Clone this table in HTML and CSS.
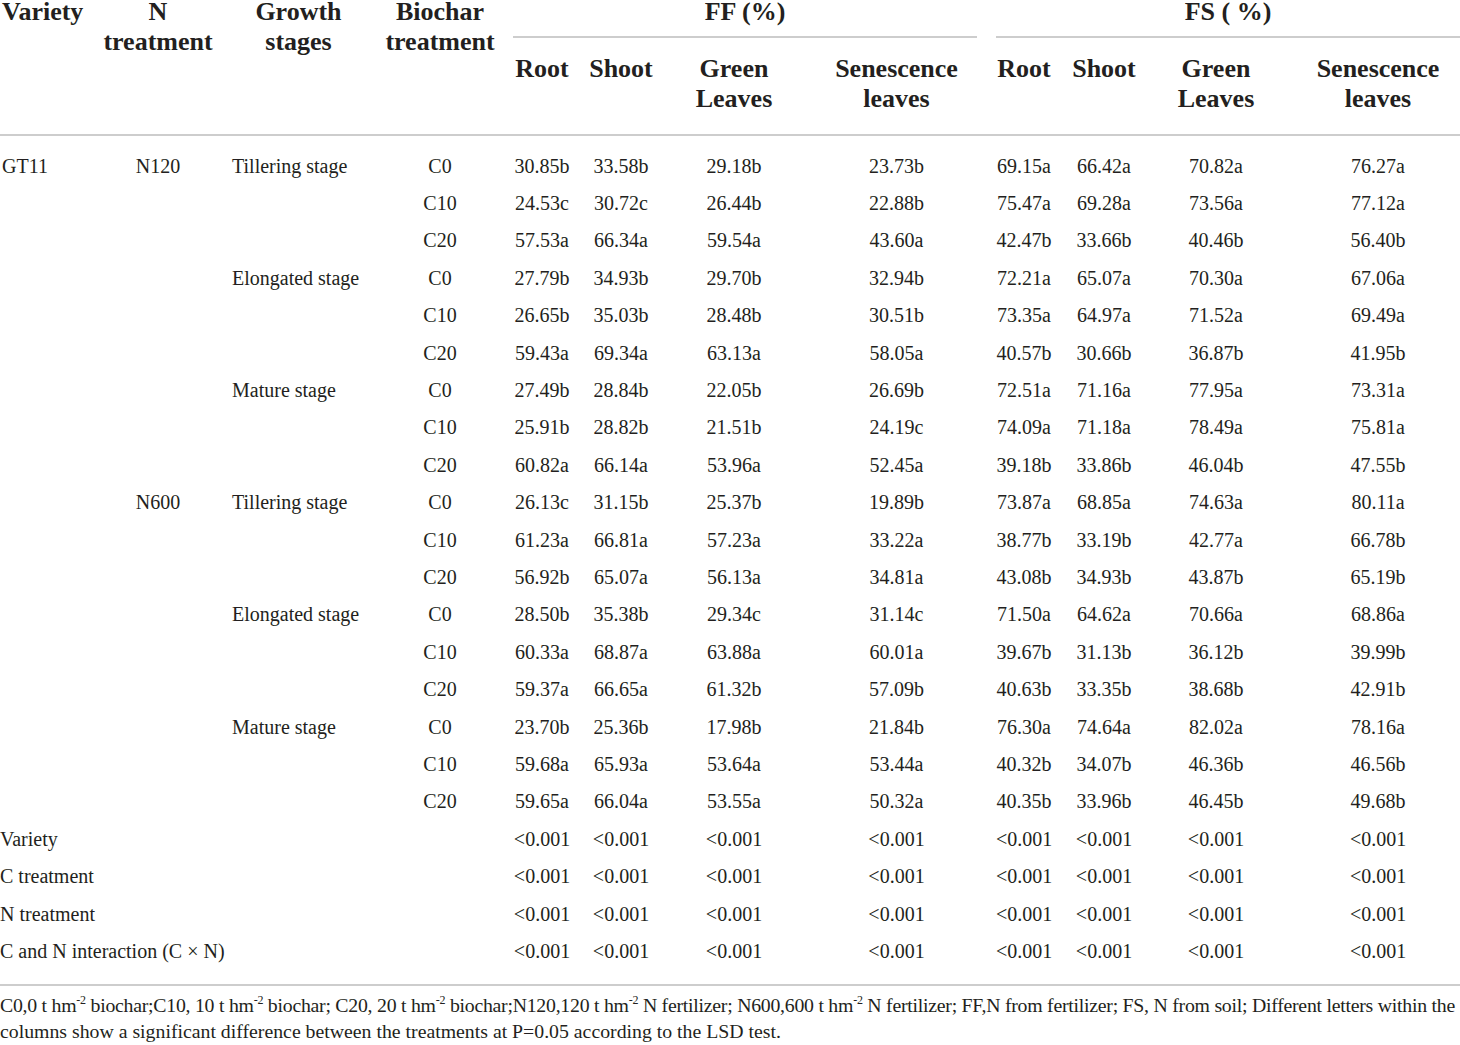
FILE: index.html
```html
<!DOCTYPE html>
<html>
<head>
<meta charset="utf-8">
<link rel="stylesheet" href="styles.css">
</head>
<body>
<table class="data">
  <colgroup>
    <col class="w-var"><col class="w-n"><col class="w-growth"><col class="w-bio"><col class="w-gap1">
    <col class="w-root"><col class="w-shoot"><col class="w-green"><col class="w-sen">
    <col class="w-gap2">
    <col class="w-root2"><col class="w-shoot"><col class="w-green"><col class="w-sen2">
  </colgroup>
  <thead>
    <tr class="top">
      <th rowspan="2" class="h-left">Variety</th>
      <th rowspan="2">N<br>treatment</th>
      <th rowspan="2">Growth<br>stages</th>
      <th rowspan="2">Biochar<br>treatment</th>
      <th rowspan="2" class="gap"></th>
      <th colspan="4" class="group">FF (%)</th>
      <th class="gap nob"></th>
      <th colspan="4" class="group">FS ( %)</th>
    </tr>
    <tr class="sub">
      <th>Root</th>
      <th>Shoot</th>
      <th>Green<br>Leaves</th>
      <th>Senescence<br>leaves</th>
      <th class="gap"></th>
      <th>Root</th>
      <th>Shoot</th>
      <th>Green<br>Leaves</th>
      <th>Senescence<br>leaves</th>
    </tr>
  </thead>
  <tbody>
    <tr class="first"><td>GT11</td><td>N120</td><td>Tillering stage</td><td>C0</td><td></td><td>30.85b</td><td>33.58b</td><td>29.18b</td><td>23.73b</td><td></td><td>69.15a</td><td>66.42a</td><td>70.82a</td><td>76.27a</td></tr>
    <tr><td></td><td></td><td></td><td>C10</td><td></td><td>24.53c</td><td>30.72c</td><td>26.44b</td><td>22.88b</td><td></td><td>75.47a</td><td>69.28a</td><td>73.56a</td><td>77.12a</td></tr>
    <tr><td></td><td></td><td></td><td>C20</td><td></td><td>57.53a</td><td>66.34a</td><td>59.54a</td><td>43.60a</td><td></td><td>42.47b</td><td>33.66b</td><td>40.46b</td><td>56.40b</td></tr>
    <tr><td></td><td></td><td>Elongated stage</td><td>C0</td><td></td><td>27.79b</td><td>34.93b</td><td>29.70b</td><td>32.94b</td><td></td><td>72.21a</td><td>65.07a</td><td>70.30a</td><td>67.06a</td></tr>
    <tr><td></td><td></td><td></td><td>C10</td><td></td><td>26.65b</td><td>35.03b</td><td>28.48b</td><td>30.51b</td><td></td><td>73.35a</td><td>64.97a</td><td>71.52a</td><td>69.49a</td></tr>
    <tr><td></td><td></td><td></td><td>C20</td><td></td><td>59.43a</td><td>69.34a</td><td>63.13a</td><td>58.05a</td><td></td><td>40.57b</td><td>30.66b</td><td>36.87b</td><td>41.95b</td></tr>
    <tr><td></td><td></td><td>Mature stage</td><td>C0</td><td></td><td>27.49b</td><td>28.84b</td><td>22.05b</td><td>26.69b</td><td></td><td>72.51a</td><td>71.16a</td><td>77.95a</td><td>73.31a</td></tr>
    <tr><td></td><td></td><td></td><td>C10</td><td></td><td>25.91b</td><td>28.82b</td><td>21.51b</td><td>24.19c</td><td></td><td>74.09a</td><td>71.18a</td><td>78.49a</td><td>75.81a</td></tr>
    <tr><td></td><td></td><td></td><td>C20</td><td></td><td>60.82a</td><td>66.14a</td><td>53.96a</td><td>52.45a</td><td></td><td>39.18b</td><td>33.86b</td><td>46.04b</td><td>47.55b</td></tr>
    <tr><td></td><td>N600</td><td>Tillering stage</td><td>C0</td><td></td><td>26.13c</td><td>31.15b</td><td>25.37b</td><td>19.89b</td><td></td><td>73.87a</td><td>68.85a</td><td>74.63a</td><td>80.11a</td></tr>
    <tr><td></td><td></td><td></td><td>C10</td><td></td><td>61.23a</td><td>66.81a</td><td>57.23a</td><td>33.22a</td><td></td><td>38.77b</td><td>33.19b</td><td>42.77a</td><td>66.78b</td></tr>
    <tr><td></td><td></td><td></td><td>C20</td><td></td><td>56.92b</td><td>65.07a</td><td>56.13a</td><td>34.81a</td><td></td><td>43.08b</td><td>34.93b</td><td>43.87b</td><td>65.19b</td></tr>
    <tr><td></td><td></td><td>Elongated stage</td><td>C0</td><td></td><td>28.50b</td><td>35.38b</td><td>29.34c</td><td>31.14c</td><td></td><td>71.50a</td><td>64.62a</td><td>70.66a</td><td>68.86a</td></tr>
    <tr><td></td><td></td><td></td><td>C10</td><td></td><td>60.33a</td><td>68.87a</td><td>63.88a</td><td>60.01a</td><td></td><td>39.67b</td><td>31.13b</td><td>36.12b</td><td>39.99b</td></tr>
    <tr><td></td><td></td><td></td><td>C20</td><td></td><td>59.37a</td><td>66.65a</td><td>61.32b</td><td>57.09b</td><td></td><td>40.63b</td><td>33.35b</td><td>38.68b</td><td>42.91b</td></tr>
    <tr><td></td><td></td><td>Mature stage</td><td>C0</td><td></td><td>23.70b</td><td>25.36b</td><td>17.98b</td><td>21.84b</td><td></td><td>76.30a</td><td>74.64a</td><td>82.02a</td><td>78.16a</td></tr>
    <tr><td></td><td></td><td></td><td>C10</td><td></td><td>59.68a</td><td>65.93a</td><td>53.64a</td><td>53.44a</td><td></td><td>40.32b</td><td>34.07b</td><td>46.36b</td><td>46.56b</td></tr>
    <tr><td></td><td></td><td></td><td>C20</td><td></td><td>59.65a</td><td>66.04a</td><td>53.55a</td><td>50.32a</td><td></td><td>40.35b</td><td>33.96b</td><td>46.45b</td><td>49.68b</td></tr>
    <tr class="stat"><td colspan="4">Variety</td><td></td><td>&lt;0.001</td><td>&lt;0.001</td><td>&lt;0.001</td><td>&lt;0.001</td><td></td><td>&lt;0.001</td><td>&lt;0.001</td><td>&lt;0.001</td><td>&lt;0.001</td></tr>
    <tr class="stat"><td colspan="4">C treatment</td><td></td><td>&lt;0.001</td><td>&lt;0.001</td><td>&lt;0.001</td><td>&lt;0.001</td><td></td><td>&lt;0.001</td><td>&lt;0.001</td><td>&lt;0.001</td><td>&lt;0.001</td></tr>
    <tr class="stat"><td colspan="4">N treatment</td><td></td><td>&lt;0.001</td><td>&lt;0.001</td><td>&lt;0.001</td><td>&lt;0.001</td><td></td><td>&lt;0.001</td><td>&lt;0.001</td><td>&lt;0.001</td><td>&lt;0.001</td></tr>
    <tr class="stat last"><td colspan="4">C and N interaction (C × N)</td><td></td><td>&lt;0.001</td><td>&lt;0.001</td><td>&lt;0.001</td><td>&lt;0.001</td><td></td><td>&lt;0.001</td><td>&lt;0.001</td><td>&lt;0.001</td><td>&lt;0.001</td></tr>
  </tbody>
</table>
<div class="note">
  <span class="note-line tight">C0,0 t hm<sup>-2</sup> biochar;C10, 10 t hm<sup>-2</sup> biochar; C20, 20 t hm<sup>-2</sup> biochar;N120,120 t hm<sup>-2</sup> N fertilizer; N600,600 t hm<sup>-2</sup> N fertilizer; FF,N from fertilizer; FS, N from soil; Different letters within the</span>
  <span class="note-line">columns show a significant difference between the treatments at P=0.05 according to the LSD test.</span>
</div>
</body>
</html>
```

FILE: styles.css
```css
html, body {
  margin: 0;
  padding: 0;
  background: #ffffff;
}

body {
  font-family: "Liberation Serif", "Times New Roman", serif;
  color: #231f20;
  overflow: hidden;
}

.data {
  width: 1460px;
  table-layout: fixed;
  border-collapse: separate;
  border-spacing: 0;
  margin-top: -3px;
}

.w-var { width: 103px; }
.w-n { width: 110px; }
.w-growth { width: 171px; }
.w-bio { width: 112px; }
.w-gap1 { width: 17px; }
.w-root { width: 76px; }
.w-shoot { width: 71px; }
.w-green { width: 148px; }
.w-sen { width: 169px; }
.w-gap2 { width: 19px; }
.w-root2 { width: 75px; }
.w-sen2 { width: 170px; }

/* header */
.data th {
  font-size: 26px;
  font-weight: bold;
  line-height: 30px;
  color: #231f20;
  text-align: center;
  vertical-align: top;
  padding: 0;
  white-space: nowrap;
}

.data thead th[rowspan] {
  border-bottom: 2px solid #cdcdcd;
}

.data .top th {
  padding-bottom: 9px;
}

.data .top th.h-left {
  text-align: left;
  padding-left: 2px;
}

.data .top th.group {
  border-bottom: 2px solid #cdcdcd;
}

.data .top th.nob {
  border-bottom: 0;
}

.data .sub th {
  padding-top: 16px;
  padding-bottom: 20px;
  border-bottom: 2px solid #cdcdcd;
}

/* body cells */
.data td {
  font-size: 20px;
  line-height: 37.4px;
  padding: 0;
  text-align: center;
  white-space: nowrap;
  vertical-align: top;
}

.data tbody td:nth-child(1) {
  text-align: left;
  padding-left: 2px;
}

.data tbody tr:not(.stat) td:nth-child(3) {
  text-align: left;
  padding-left: 19px;
}

.data .stat td:nth-child(1) {
  padding-left: 0;
}

/* column offsets shared by sub header and body */
.data .sub th:nth-last-child(9),
.data tbody td:nth-last-child(9) {
  padding-right: 18px;
}

.data .sub th:nth-last-child(8),
.data tbody td:nth-last-child(8) {
  padding-right: 7px;
}

.data .sub th:nth-last-child(6),
.data tbody td:nth-last-child(6) {
  padding-left: 8px;
}

.data .sub th:nth-last-child(4),
.data tbody td:nth-last-child(4) {
  padding-right: 19px;
}

.data .sub th:nth-last-child(3),
.data tbody td:nth-last-child(3) {
  padding-right: 5px;
}

.data .sub th:nth-last-child(1),
.data tbody td:nth-last-child(1) {
  padding-left: 6px;
}

.data .first td {
  padding-top: 11.5px;
}

.data .last td {
  padding-bottom: 14px;
  border-bottom: 2px solid #cdcdcd;
}

/* footnote */
.note {
  margin-top: 6px;
  font-size: 19.8px;
  line-height: 26px;
}

.note-line {
  display: block;
  white-space: nowrap;
}

.note-line.tight {
  letter-spacing: -0.25px;
}

.note sup {
  font-size: 12px;
  line-height: 0;
  vertical-align: 8px;
}
```
